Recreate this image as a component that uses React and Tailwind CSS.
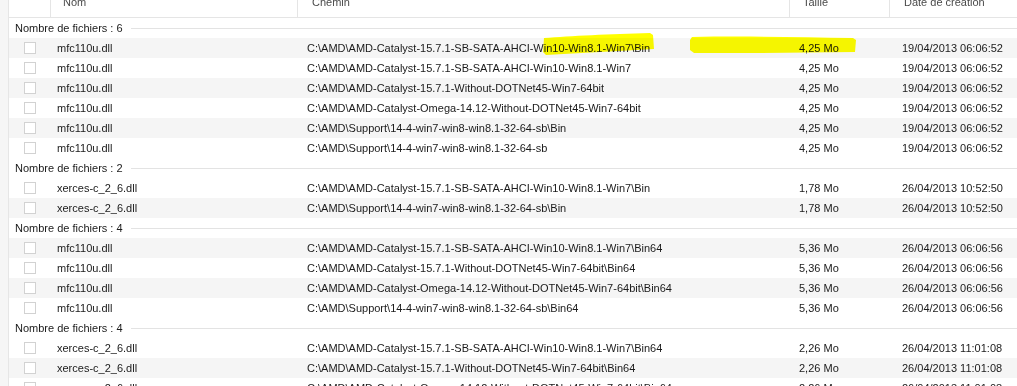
import React from "react";

const COLS = "grid grid-cols-[42px_247px_492px_100px_1fr]";

const groups = [
  {
    name: "mfc110u.dll",
    size: "4,25 Mo",
    date: "19/04/2013 06:06:52",
    paths: [
      "C:\\AMD\\AMD-Catalyst-15.7.1-SB-SATA-AHCI-Win10-Win8.1-Win7\\Bin",
      "C:\\AMD\\AMD-Catalyst-15.7.1-SB-SATA-AHCI-Win10-Win8.1-Win7",
      "C:\\AMD\\AMD-Catalyst-15.7.1-Without-DOTNet45-Win7-64bit",
      "C:\\AMD\\AMD-Catalyst-Omega-14.12-Without-DOTNet45-Win7-64bit",
      "C:\\AMD\\Support\\14-4-win7-win8-win8.1-32-64-sb\\Bin",
      "C:\\AMD\\Support\\14-4-win7-win8-win8.1-32-64-sb",
    ],
  },
  {
    name: "xerces-c_2_6.dll",
    size: "1,78 Mo",
    date: "26/04/2013 10:52:50",
    paths: [
      "C:\\AMD\\AMD-Catalyst-15.7.1-SB-SATA-AHCI-Win10-Win8.1-Win7\\Bin",
      "C:\\AMD\\Support\\14-4-win7-win8-win8.1-32-64-sb\\Bin",
    ],
  },
  {
    name: "mfc110u.dll",
    size: "5,36 Mo",
    date: "26/04/2013 06:06:56",
    paths: [
      "C:\\AMD\\AMD-Catalyst-15.7.1-SB-SATA-AHCI-Win10-Win8.1-Win7\\Bin64",
      "C:\\AMD\\AMD-Catalyst-15.7.1-Without-DOTNet45-Win7-64bit\\Bin64",
      "C:\\AMD\\AMD-Catalyst-Omega-14.12-Without-DOTNet45-Win7-64bit\\Bin64",
      "C:\\AMD\\Support\\14-4-win7-win8-win8.1-32-64-sb\\Bin64",
    ],
  },
  {
    name: "xerces-c_2_6.dll",
    size: "2,26 Mo",
    date: "26/04/2013 11:01:08",
    count: 4,
    paths: [
      "C:\\AMD\\AMD-Catalyst-15.7.1-SB-SATA-AHCI-Win10-Win8.1-Win7\\Bin64",
      "C:\\AMD\\AMD-Catalyst-15.7.1-Without-DOTNet45-Win7-64bit\\Bin64",
      "C:\\AMD\\AMD-Catalyst-Omega-14.12-Without-DOTNet45-Win7-64bit\\Bin64",
    ],
  },
];

function GroupHeader({ count }) {
  return (
    <div className="h-5 flex items-center pl-[6px] text-[#1a1a1a]">
      <span>Nombre de fichiers : {count}</span>
      <div className="flex-1 h-px bg-[#e3e3e3] ml-2" />
    </div>
  );
}

function FileRow({ name, path, size, date, striped }) {
  return (
    <div
      className={`${COLS} h-5 items-center text-[#1a1a1a] ${
        striped ? "bg-[#f5f5f5]" : "bg-white"
      }`}
    >
      <div className="pl-[15px] flex items-center">
        <div className="w-[12px] h-[12px] border border-[#d2d2d2] bg-white" />
      </div>
      <div className="pl-[6px] whitespace-nowrap">{name}</div>
      <div className="pl-[9px] whitespace-nowrap">{path}</div>
      <div className="pl-[9px] whitespace-nowrap">{size}</div>
      <div className="pl-[12px] whitespace-nowrap">{date}</div>
    </div>
  );
}

export default function App() {
  // build the flat list so the stripes alternate across the whole list
  let idx = 0;
  const items = [];
  groups.forEach((g, gi) => {
    items.push(
      <GroupHeader key={`g${gi}`} count={g.count || g.paths.length} />
    );
    idx++;
    g.paths.forEach((p, pi) => {
      items.push(
        <FileRow
          key={`r${gi}-${pi}`}
          name={g.name}
          path={p}
          size={g.size}
          date={g.date}
          striped={idx % 2 === 1}
        />
      );
      idx++;
    });
  });

  return (
    <div className="w-[1017px] h-[386px] overflow-hidden bg-white flex font-['Liberation_Sans',Arial,sans-serif] text-[11px] leading-none">
      <div className="w-[9px] shrink-0 bg-[#f6f6f6] border-r border-[#e6e6e6]" />
      <div className="flex-1 relative">
        <div
          className={`${COLS} h-[30px] -mt-[12px] border-b border-[#e5e5e5] text-[#4a4a4a] items-center`}
        >
          <div className="h-full border-r border-[#e5e5e5]" />
          <div className="h-full flex items-center pl-[12px] border-r border-[#e5e5e5]">
            Nom
          </div>
          <div className="h-full flex items-center pl-[14px] border-r border-[#e5e5e5]">
            Chemin
          </div>
          <div className="h-full flex items-center pl-[13px] border-r border-[#e5e5e5]">
            Taille
          </div>
          <div className="h-full flex items-center pl-[14px]">
            Date de création
          </div>
        </div>
        {items}

        {/* yellow marker strokes over the first row */}
        <svg
          className="absolute left-[-9px] top-0 pointer-events-none mix-blend-multiply"
          width="1017"
          height="70"
          viewBox="0 0 1017 70"
        >
          <path
            d="M544 38 C570 36 610 34 650 33 L653 35 L654 49 C620 51 580 53 546 55 L543 52 Z"
            fill="#ffff00"
          />
          <path
            d="M692 37 C740 36 800 37 853 38 L856 40 L855 52 C800 53 740 53 694 53 L690 50 L690 40 Z"
            fill="#ffff00"
          />
        </svg>
      </div>
    </div>
  );
}
